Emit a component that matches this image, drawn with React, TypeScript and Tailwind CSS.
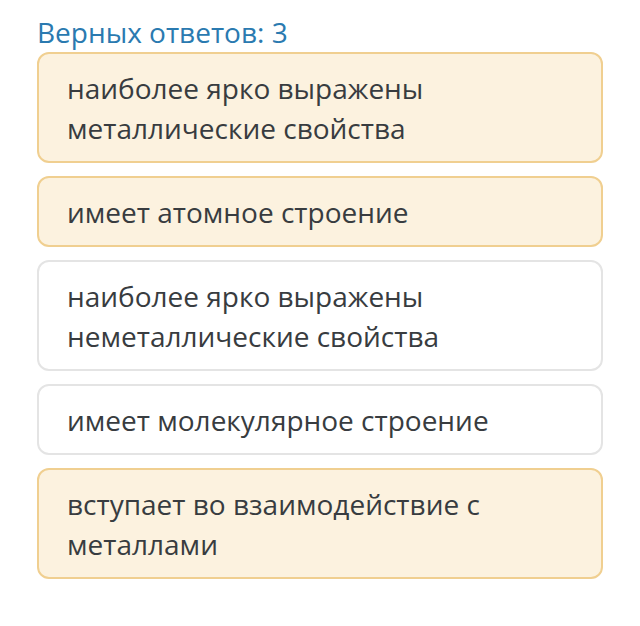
const answers = [
  { text: "наиболее ярко выражены металлические свойства", picked: true },
  { text: "имеет атомное строение", picked: true },
  { text: "наиболее ярко выражены неметаллические свойства", picked: false },
  { text: "имеет молекулярное строение", picked: false },
  { text: "вступает во взаимодействие с металлами", picked: true },
];

export default function App() {
  return (
    <div className="min-h-[626px] w-[640px] bg-white font-['Open_Sans',sans-serif]">
      <div className="flex flex-col pl-[37px] pr-[37px] pt-[14px]">
        <h2 className="text-[28px] leading-[36px] text-[#2a7ab0]">Верных ответов: 3</h2>
        <div className="mt-[2px] flex flex-col gap-[13px]">
          {answers.map((a) => (
            <div
              key={a.text}
              className={
                a.picked
                  ? "rounded-[12px] border-2 border-[#f0cf90] bg-[#fcf2df] px-[28px] py-[13.5px] text-[28px] leading-[40px] text-[#383c40]"
                  : "rounded-[12px] border-2 border-[#e4e4e4] bg-white px-[28px] py-[13.5px] text-[28px] leading-[40px] text-[#383c40]"
              }
            >
              {a.text}
            </div>
          ))}
        </div>
      </div>
    </div>
  );
}
